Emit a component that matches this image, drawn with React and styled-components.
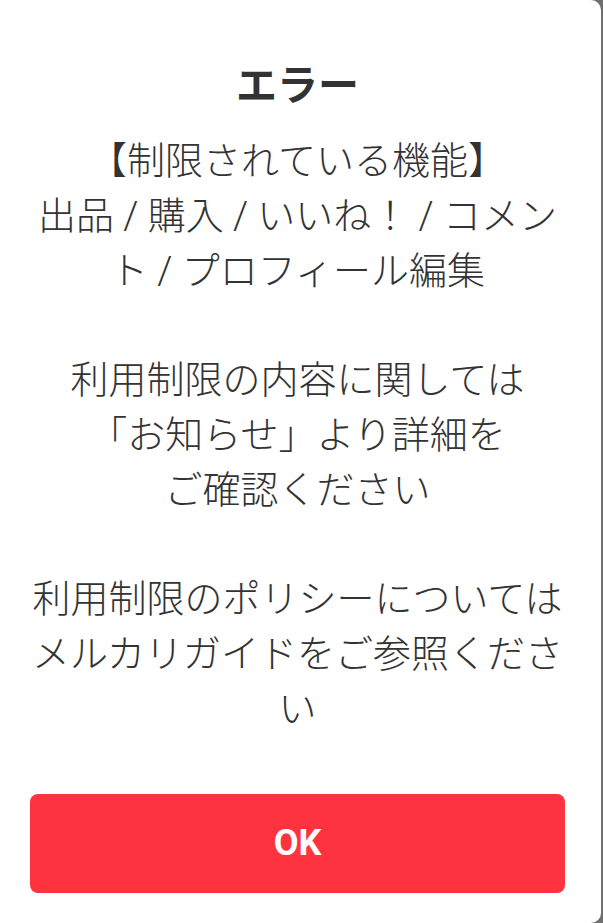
import React from 'react'
import styled, { createGlobalStyle } from 'styled-components'

const GlobalStyle = createGlobalStyle`
    html, body {
        margin: 0;
        padding: 0;
        height: 100%;
        background-color: #6f6f6f;
    }
    #root {
        height: 100%;
    }
`

const Dialog = styled.div`
    box-sizing: border-box;
    width: 601px;
    height: 923px;
    background-color: #ffffff;
    border-radius: 0 10px 10px 0;
    padding: 58px 36px 0 30px;
    display: flex;
    flex-direction: column;
    font-family: Roboto, "Noto Sans CJK JP", sans-serif;
    color: #333333;
`

const Title = styled.h1`
    margin: 0;
    font-size: 41px;
    line-height: 56px;
    font-weight: bold;
    text-align: center;
`

const Message = styled.p`
    margin: 20px 0 0;
    font-size: 38px;
    font-weight: 300;
    line-height: 54.8px;
    text-align: center;
    white-space: pre-wrap;
`

const OkButton = styled.button`
    margin-top: 57px;
    height: 99px;
    width: 100%;
    border: none;
    border-radius: 8px;
    background-color: #ff333f;
    color: #ffffff;
    font-family: Roboto, "Noto Sans CJK JP", sans-serif;
    font-size: 36px;
    font-weight: bold;
`

const message = `【制限されている機能】
出品 / 購入 / いいね！ / コメント / プロフィール編集

利用制限の内容に関しては
「お知らせ」より詳細を
ご確認ください

利用制限のポリシーについてはメルカリガイドをご参照ください`

function App() {
    return (
        <>
            <GlobalStyle />
            <Dialog>
                <Title>エラー</Title>
                <Message>{message}</Message>
                <OkButton>OK</OkButton>
            </Dialog>
        </>
    )
}

export default App
